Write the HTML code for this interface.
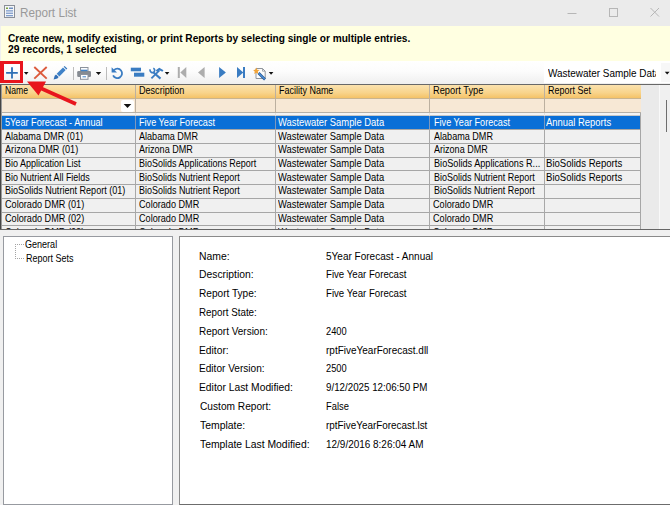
<!DOCTYPE html>
<html><head><meta charset="utf-8"><title>Report List</title>
<style>
html,body{margin:0;padding:0;overflow:hidden}
body{width:670px;height:505px;overflow:hidden;background:#f0f0f0;position:relative;font-family:"Liberation Sans",sans-serif;color:#000}
.a{position:absolute}
.t{position:absolute;white-space:nowrap;transform-origin:0 0;line-height:1}
</style></head><body>

<div class="a" style="left:0;top:0;width:670px;height:26px;background:#ebebeb"></div>
<svg class="a" style="left:4px;top:5px" width="12" height="14" viewBox="0 0 12 14">
<rect x="0.5" y="0.5" width="10" height="12" fill="#f4f6f8" stroke="#8a8f98"/>
<rect x="2" y="2.5" width="2" height="1.5" fill="#7aa23c"/><rect x="5" y="2.5" width="4" height="1.5" fill="#6f8fc0"/>
<rect x="2" y="5.2" width="7" height="1.3" fill="#7f9ccb"/><rect x="2" y="7.6" width="7" height="1.3" fill="#7f9ccb"/><rect x="2" y="10" width="7" height="1.3" fill="#7f9ccb"/>
</svg>
<div class="t" style="left:20.04px;top:7px;font-size:12.2px;transform:scaleX(0.9602);color:#999">Report List</div>
<svg class="a" style="left:556px;top:0" width="114" height="26" viewBox="0 0 114 26">
<path d="M11.500 13.500h9" stroke="#b6b6b6" stroke-width="1" fill="none"/>
<rect x="53.500" y="8.500" width="8" height="8" stroke="#b6b6b6" stroke-width="1" fill="none"/>
<path d="M94.500 8l8.500 8.500M103 8l-8.500 8.500" stroke="#b6b6b6" stroke-width="1" fill="none"/>
</svg>
<div class="a" style="left:1px;top:26px;width:669px;height:35.3px;background:#ffffe1"></div>
<div class="t" style="left:7.53px;top:33px;font-size:11px;transform:scaleX(0.9200);font-weight:bold">Create new, modify existing, or print Reports by selecting single or multiple entries.</div>
<div class="t" style="left:8.12px;top:44px;font-size:11px;transform:scaleX(0.9444);font-weight:bold">29 records, 1 selected</div>
<div class="a" style="left:1px;top:61.3px;width:669px;height:22.7px;background:linear-gradient(#ffffff 0%,#fcfcfc 45%,#efefef 100%)"></div>
<div class="a" style="left:544.2px;top:62.3px;width:126px;height:20.4px;background:#fff"></div>
<div class="a" style="left:544px;top:62px;width:112px;height:21px;overflow:hidden">
<div class="t" style="left:4.20px;top:5px;font-size:11.6px;transform:scaleX(0.8562)">Wastewater Sample Data</div>
</div>
<div class="a" style="left:661px;top:63px;width:9px;height:19px;background:#f7f7f7"></div>
<svg class="a" style="left:664px;top:71px" width="6" height="5"><path d="M0.8 0.7h4.8l-2.4 2.8z" fill="#111"/></svg>
<svg class="a" style="left:0;top:60px" width="300" height="26" viewBox="0 0 300 26">
<path d="M12 7.200v11.300M6.100 12.900h11.700" stroke="#2e6fb5" stroke-width="1.800" fill="none"/>
<path d="M23.900 12.100h4.600l-2.300 2.700z" fill="#111"/>
<path d="M34.300 7l12.400 11.600M46.700 7l-12.400 11.600" stroke="#dc5a3c" stroke-width="1.900" fill="none"/>
<path d="M53.600 19.400l1.100-3.700 1.300-1.300 2.700 2.700-1.300 1.300z" fill="#2f6db5"/>
<path d="M56.700 13.700l6.300-6.300 2.700 2.700-6.300 6.300z" fill="#3f82c8"/>
<path d="M63.700 6.800l.9-.9 2.700 2.700-.9.900z" fill="#3477bd"/>
<path d="M73.500 7v13" stroke="#bcbcbc" stroke-width="1"/>
<rect x="80.500" y="7.500" width="7.500" height="4.500" fill="#fdfdfd" stroke="#8b929c" stroke-width="1"/>
<rect x="77.200" y="11" width="13.800" height="6" rx="1.300" fill="#868b92"/>
<rect x="80.500" y="14.500" width="7.500" height="4.800" fill="#fdfdfd" stroke="#8b929c" stroke-width="1"/>
<rect x="81" y="9.700" width="6.500" height="1.500" fill="#3f82c8"/>
<rect x="82.500" y="16.300" width="3.500" height="1" fill="#3f82c8"/>
<path d="M95.800 12.100h5.400l-2.700 3z" fill="#111"/>
<path d="M106.500 7v13" stroke="#bcbcbc" stroke-width="1"/>
<path d="M114 10.100a4.700 4.700 0 1 1 -0.900 5.300" stroke="#3a7cc2" stroke-width="1.800" fill="none"/>
<path d="M111.600 7.200v5.400h5.400z" fill="#3a7cc2"/>
<rect x="130.800" y="7.700" width="10.200" height="3.600" fill="#3a7cc2"/>
<rect x="134" y="12.700" width="10.300" height="4" fill="#3a7cc2"/>
<path d="M153.300 12.300l7.200 6.300" stroke="#3a7cc2" stroke-width="2.100" fill="none"/>
<path d="M150.300 9.300A2.300 2.300 0 1 0 153.300 8.200" stroke="#3a7cc2" stroke-width="1.700" fill="none"/>
<path d="M159.400 10.400l-8 8" stroke="#3a7cc2" stroke-width="1.900" fill="none"/>
<path d="M155.800 10.300l3.500-2.600 4.200 2.500-1.200 1.500-2.800-1.400-2.400 1.600z" fill="#3a7cc2"/>
<path d="M164.800 12.100h4.600l-2.300 2.700z" fill="#111"/>
<path d="M178.800 7v11" stroke="#adadad" stroke-width="2"/>
<path d="M186.300 7v11l-6-5.500z" fill="#adadad"/>
<path d="M204.600 7v11l-6.600-5.500z" fill="#adadad"/>
<path d="M219.100 7v11l6.800-5.500z" fill="#3a7cc2"/>
<path d="M237 7v11l6.300-5.500z" fill="#3a7cc2"/>
<path d="M244 7v11" stroke="#3a7cc2" stroke-width="2"/>
<path d="M256 8.500h6.500l2.700 2.700v7.300h-9.200z" fill="#fcfcfc" stroke="#8f949b" stroke-width="1"/>
<path d="M262.500 8.500v2.700h2.700" fill="none" stroke="#8f949b" stroke-width=".8"/>
<path d="M258.500 13l6.500 6.500" stroke="#27578f" stroke-width="2.600"/>
<path d="M258.700 13.200l6.100 6.100" stroke="#4a8ed6" stroke-width="1.300"/>
<path d="M256.300 7.600l.9 2.100 2.300.3-1.700 1.600.4 2.300-1.900-1.100-2 1.100.4-2.300-1.600-1.600 2.200-.3z" fill="#f2a437"/>
<path d="M268.800 12.100h4.600l-2.300 2.700z" fill="#111"/>
</svg>

<div class="a" style="left:0;top:84px;width:670px;height:146px;background:#eaeaea"></div>
<div class="a" style="left:0;top:84px;width:1px;height:146px;background:#454545"></div>
<div class="a" style="left:1px;top:84px;width:1px;height:146px;background:#9a9a9a"></div>
<div class="a" style="left:0;top:84px;width:670px;height:1px;background:#686868"></div>
<div class="a" style="left:2px;top:85px;width:639px;height:13.5px;background:linear-gradient(#fbe2ae 0%,#f8d48c 55%,#f4bf60 100%)"></div>
<div class="a" style="left:2px;top:98.3px;width:639px;height:1px;background:#c9b48e"></div>
<div class="a" style="left:2px;top:99.3px;width:639px;height:13px;background:#f7e8d5"></div>
<div class="a" style="left:2px;top:112px;width:639px;height:1px;background:#b5b0a8"></div>
<div class="a" style="left:2px;top:113px;width:639px;height:3px;background:#f4f4f4"></div>
<div class="a" style="left:2px;top:115.4px;width:639px;height:113.6px;background:#f0f0f0"></div>
<div class="a" style="left:2px;top:115.4px;width:639px;height:1px;background:#c8c8c8"></div>
<div class="a" style="left:2px;top:116.4px;width:639px;height:12.60px;background:#0a6fd7"></div>
<div class="a" style="left:2px;top:129.00px;width:639px;height:1px;background:#a6a6a6"></div>
<div class="a" style="left:2px;top:142.75px;width:639px;height:1px;background:#a6a6a6"></div>
<div class="a" style="left:2px;top:156.50px;width:639px;height:1px;background:#a6a6a6"></div>
<div class="a" style="left:2px;top:170.25px;width:639px;height:1px;background:#a6a6a6"></div>
<div class="a" style="left:2px;top:184.00px;width:639px;height:1px;background:#a6a6a6"></div>
<div class="a" style="left:2px;top:197.75px;width:639px;height:1px;background:#a6a6a6"></div>
<div class="a" style="left:2px;top:211.50px;width:639px;height:1px;background:#a6a6a6"></div>
<div class="a" style="left:2px;top:225.25px;width:639px;height:1px;background:#a6a6a6"></div>
<div class="a" style="left:0;top:116px;width:641px;height:113px;overflow:hidden">
<div class="t" style="left:4.85px;top:2px;font-size:10.3px;transform:scaleX(0.8868);color:#fff">5Year Forecast - Annual</div>
<div class="t" style="left:139.09px;top:2px;font-size:10.3px;transform:scaleX(0.8850);color:#fff">Five Year Forecast</div>
<div class="t" style="left:277.70px;top:2px;font-size:10.3px;transform:scaleX(0.9118);color:#fff">Wastewater Sample Data</div>
<div class="t" style="left:433.59px;top:2px;font-size:10.3px;transform:scaleX(0.8850);color:#fff">Five Year Forecast</div>
<div class="t" style="left:546.30px;top:2px;font-size:10.3px;transform:scaleX(0.9172);color:#fff">Annual Reports</div>
<div class="t" style="left:5.00px;top:16px;font-size:10.3px;transform:scaleX(0.8855)">Alabama DMR (01)</div>
<div class="t" style="left:139.20px;top:16px;font-size:10.3px;transform:scaleX(0.8808)">Alabama DMR</div>
<div class="t" style="left:277.70px;top:16px;font-size:10.3px;transform:scaleX(0.9118)">Wastewater Sample Data</div>
<div class="t" style="left:433.70px;top:16px;font-size:10.3px;transform:scaleX(0.8808)">Alabama DMR</div>
<div class="t" style="left:5.00px;top:29px;font-size:10.3px;transform:scaleX(0.8889)">Arizona DMR (01)</div>
<div class="t" style="left:139.20px;top:29px;font-size:10.3px;transform:scaleX(0.8782)">Arizona DMR</div>
<div class="t" style="left:277.70px;top:29px;font-size:10.3px;transform:scaleX(0.9118)">Wastewater Sample Data</div>
<div class="t" style="left:433.70px;top:29px;font-size:10.3px;transform:scaleX(0.8782)">Arizona DMR</div>
<div class="t" style="left:4.90px;top:43px;font-size:10.3px;transform:scaleX(0.8739)">Bio Application List</div>
<div class="t" style="left:139.10px;top:43px;font-size:10.3px;transform:scaleX(0.8722)">BioSolids Applications Report</div>
<div class="t" style="left:277.70px;top:43px;font-size:10.3px;transform:scaleX(0.9118)">Wastewater Sample Data</div>
<div class="t" style="left:433.59px;top:43px;font-size:10.3px;transform:scaleX(0.8881)">BioSolids Applications R...</div>
<div class="t" style="left:545.95px;top:43px;font-size:10.3px;transform:scaleX(0.9317)">BioSolids Reports</div>
<div class="t" style="left:4.91px;top:57px;font-size:10.3px;transform:scaleX(0.8653)">Bio Nutrient All Fields</div>
<div class="t" style="left:139.10px;top:57px;font-size:10.3px;transform:scaleX(0.8712)">BioSolids Nutrient Report</div>
<div class="t" style="left:277.70px;top:57px;font-size:10.3px;transform:scaleX(0.9118)">Wastewater Sample Data</div>
<div class="t" style="left:433.60px;top:57px;font-size:10.3px;transform:scaleX(0.8712)">BioSolids Nutrient Report</div>
<div class="t" style="left:545.95px;top:57px;font-size:10.3px;transform:scaleX(0.9317)">BioSolids Reports</div>
<div class="t" style="left:4.90px;top:70px;font-size:10.3px;transform:scaleX(0.8797)">BioSolids Nutrient Report (01)</div>
<div class="t" style="left:139.10px;top:70px;font-size:10.3px;transform:scaleX(0.8712)">BioSolids Nutrient Report</div>
<div class="t" style="left:277.70px;top:70px;font-size:10.3px;transform:scaleX(0.9118)">Wastewater Sample Data</div>
<div class="t" style="left:433.60px;top:70px;font-size:10.3px;transform:scaleX(0.8712)">BioSolids Nutrient Report</div>
<div class="t" style="left:4.56px;top:84px;font-size:10.3px;transform:scaleX(0.8870)">Colorado DMR (01)</div>
<div class="t" style="left:138.76px;top:84px;font-size:10.3px;transform:scaleX(0.8842)">Colorado DMR</div>
<div class="t" style="left:277.70px;top:84px;font-size:10.3px;transform:scaleX(0.9118)">Wastewater Sample Data</div>
<div class="t" style="left:433.26px;top:84px;font-size:10.3px;transform:scaleX(0.8842)">Colorado DMR</div>
<div class="t" style="left:4.56px;top:98px;font-size:10.3px;transform:scaleX(0.8870)">Colorado DMR (02)</div>
<div class="t" style="left:138.76px;top:98px;font-size:10.3px;transform:scaleX(0.8842)">Colorado DMR</div>
<div class="t" style="left:277.70px;top:98px;font-size:10.3px;transform:scaleX(0.9118)">Wastewater Sample Data</div>
<div class="t" style="left:433.26px;top:98px;font-size:10.3px;transform:scaleX(0.8842)">Colorado DMR</div>
<div class="t" style="left:4.56px;top:112px;font-size:10.3px;transform:scaleX(0.8870)">Colorado DMR (03)</div>
<div class="t" style="left:138.76px;top:112px;font-size:10.3px;transform:scaleX(0.8842)">Colorado DMR</div>
<div class="t" style="left:277.70px;top:112px;font-size:10.3px;transform:scaleX(0.9118)">Wastewater Sample Data</div>
<div class="t" style="left:433.26px;top:112px;font-size:10.3px;transform:scaleX(0.8842)">Colorado DMR</div>
</div>
<div class="t" style="left:4.53px;top:86px;font-size:10.3px;transform:scaleX(0.8382)">Name</div>
<div class="t" style="left:139.10px;top:86px;font-size:10.3px;transform:scaleX(0.8804)">Description</div>
<div class="t" style="left:278.70px;top:86px;font-size:10.3px;transform:scaleX(0.8716)">Facility Name</div>
<div class="t" style="left:433.48px;top:86px;font-size:10.3px;transform:scaleX(0.9020)">Report Type</div>
<div class="t" style="left:548.10px;top:86px;font-size:10.3px;transform:scaleX(0.8723)">Report Set</div>
<div class="a" style="left:135.1px;top:85px;width:1px;height:144px;background:linear-gradient(#bcb0a0 0,#bcb0a0 28px,#e2e2e2 28px,#e2e2e2 31px,#7d98bd 31px,#7d98bd 44px,#a8a8a8 44px,#a8a8a8 144px)"></div>
<div class="a" style="left:275.1px;top:85px;width:1px;height:144px;background:linear-gradient(#bcb0a0 0,#bcb0a0 28px,#e2e2e2 28px,#e2e2e2 31px,#7d98bd 31px,#7d98bd 44px,#a8a8a8 44px,#a8a8a8 144px)"></div>
<div class="a" style="left:429.3px;top:85px;width:1px;height:144px;background:linear-gradient(#bcb0a0 0,#bcb0a0 28px,#e2e2e2 28px,#e2e2e2 31px,#7d98bd 31px,#7d98bd 44px,#a8a8a8 44px,#a8a8a8 144px)"></div>
<div class="a" style="left:543.9px;top:85px;width:1px;height:144px;background:linear-gradient(#bcb0a0 0,#bcb0a0 28px,#e2e2e2 28px,#e2e2e2 31px,#7d98bd 31px,#7d98bd 44px,#a8a8a8 44px,#a8a8a8 144px)"></div>
<div class="a" style="left:640.1px;top:113px;width:1px;height:116px;background:#a6a6a6"></div>
<div class="a" style="left:121px;top:100px;width:13px;height:12px;background:#fff;border-radius:2px"></div>
<svg class="a" style="left:123px;top:103px" width="10" height="6"><path d="M0.700 0.900h7.600l-3.800 4.200z" fill="#111"/></svg>
<div class="a" style="left:659px;top:85px;width:11px;height:144px;background:#f0f0f0;border-left:1px solid #f9f9f9;box-sizing:border-box"></div>
<div class="a" style="left:665.8px;top:99.5px;width:1.7px;height:32.5px;background:#6e6e6e"></div>
<div class="a" style="left:0;top:229px;width:670px;height:1px;background:#666"></div>
<div class="a" style="left:3px;top:236px;width:169.5px;height:269px;background:#fff;border:1px solid #979aa0;box-sizing:border-box"></div>
<svg class="a" style="left:14px;top:240px" width="12" height="24"><path d="M1 4.5h9M1.5 6v12M1 18.5h9" stroke="#a4a4a4" stroke-width="1" stroke-dasharray="1 1" fill="none"/></svg>
<div class="t" style="left:25.36px;top:240px;font-size:10.3px;transform:scaleX(0.8772)">General</div>
<div class="t" style="left:25.90px;top:254px;font-size:10.3px;transform:scaleX(0.8753)">Report Sets</div>
<div class="a" style="left:179px;top:236px;width:491px;height:269px;background:#fff;border:1px solid #8a8a8a;border-bottom-color:#6c6c6c;border-right:0;box-sizing:border-box"></div>
<div class="t" style="left:199.39px;top:250px;font-size:11.6px;transform:scaleX(0.8963)">Name:</div>
<div class="t" style="left:326.45px;top:250px;font-size:11.6px;transform:scaleX(0.8633)">5Year Forecast - Annual</div>
<div class="t" style="left:199.40px;top:268px;font-size:11.6px;transform:scaleX(0.8917)">Description:</div>
<div class="t" style="left:326.05px;top:268px;font-size:11.6px;transform:scaleX(0.8323)">Five Year Forecast</div>
<div class="t" style="left:199.42px;top:287px;font-size:11.6px;transform:scaleX(0.8715)">Report Type:</div>
<div class="t" style="left:326.05px;top:287px;font-size:11.6px;transform:scaleX(0.8323)">Five Year Forecast</div>
<div class="t" style="left:199.44px;top:306px;font-size:11.6px;transform:scaleX(0.8461)">Report State:</div>
<div class="t" style="left:199.43px;top:325px;font-size:11.6px;transform:scaleX(0.8599)">Report Version:</div>
<div class="t" style="left:326.40px;top:325px;font-size:11.6px;transform:scaleX(0.8007)">2400</div>
<div class="t" style="left:199.40px;top:344px;font-size:11.6px;transform:scaleX(0.8860)">Editor:</div>
<div class="t" style="left:326.20px;top:344px;font-size:11.6px;transform:scaleX(0.8615)">rptFiveYearForecast.dll</div>
<div class="t" style="left:199.42px;top:362px;font-size:11.6px;transform:scaleX(0.8705)">Editor Version:</div>
<div class="t" style="left:326.40px;top:362px;font-size:11.6px;transform:scaleX(0.8007)">2500</div>
<div class="t" style="left:199.40px;top:381px;font-size:11.6px;transform:scaleX(0.8881)">Editor Last Modified:</div>
<div class="t" style="left:326.38px;top:381px;font-size:11.6px;transform:scaleX(0.8420)">9/12/2025 12:06:50 PM</div>
<div class="t" style="left:199.76px;top:400px;font-size:11.6px;transform:scaleX(0.8757)">Custom Report:</div>
<div class="t" style="left:326.07px;top:400px;font-size:11.6px;transform:scaleX(0.8070)">False</div>
<div class="t" style="left:200.02px;top:419px;font-size:11.6px;transform:scaleX(0.8987)">Template:</div>
<div class="t" style="left:326.20px;top:419px;font-size:11.6px;transform:scaleX(0.8534)">rptFiveYearForecast.lst</div>
<div class="t" style="left:200.02px;top:438px;font-size:11.6px;transform:scaleX(0.8946)">Template Last Modified:</div>
<div class="t" style="left:326.11px;top:438px;font-size:11.6px;transform:scaleX(0.8587)">12/9/2016 8:26:04 AM</div>
<div class="a" style="left:0;top:61px;width:23px;height:22px;border:3px solid #e8151d;border-left-width:4px;box-sizing:border-box"></div>
<svg class="a" style="left:0;top:60px" width="100" height="60" viewBox="0 0 100 60">
<path d="M76 44L38 27" stroke="#e8151d" stroke-width="3.6" fill="none"/>
<path d="M27 21.5L46 21.5L38.5 35.5z" fill="#e8151d"/>
</svg>
</body></html>
